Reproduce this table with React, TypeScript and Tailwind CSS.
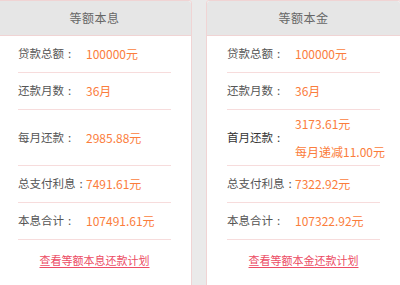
import React from 'react';

type Row = { label: string; value?: string; values?: string[]; tall?: boolean; dark?: boolean };

interface PanelProps {
  title: string;
  rows: Row[];
  link: string;
}

const Panel: React.FC<PanelProps> = ({ title, rows, link }) => (
  <div className="w-[195px] shrink-0 bg-white border border-[#f0d4d4] rounded-t-[3px] h-[300px]">
    <div className="h-[35px] bg-[#e6e6e6] border-b border-[#f0d4d4] rounded-t-[3px] flex items-center justify-center text-[12px] tracking-[0.5px] text-[#666]">
      {title}
    </div>
    <div className="px-[20px]">
      {rows.map((r) => (
        <div
          key={r.label}
          className={`flex items-center border-b border-[#f7dcdc] text-[12px] ${r.tall ? 'h-[56px]' : 'h-[37px]'}`}
        >
          <span
            className={`w-[68px] shrink-0 whitespace-nowrap text-[11.5px] ${r.dark ? 'text-[#333]' : 'text-[#555]'}`}
          >
            {r.label}
            <span className="ml-[4px]">:</span>
          </span>
          {r.values ? (
            <div className="flex flex-col gap-[12px] text-[#fb7d3c] leading-[16px]">
              {r.values.map((v) => (
                <span key={v} className="whitespace-nowrap">{v}</span>
              ))}
            </div>
          ) : (
            <span className="text-[#fb7d3c] whitespace-nowrap">{r.value}</span>
          )}
        </div>
      ))}
      <div className="pt-[12px] text-center text-[11px]">
        <a className="text-[#ec4c64] underline underline-offset-2 cursor-pointer">{link}</a>
      </div>
    </div>
  </div>
);

export default function App() {
  return (
    <div
      className="w-[400px] h-[285px] overflow-hidden bg-[#eaeaea]"
      style={{ fontFamily: '"Noto Sans CJK SC", "Noto Sans", sans-serif' }}
    >
      <div className="flex gap-[14px] -ml-[3px]">
        <Panel
          title="等额本息"
          rows={[
            { label: '贷款总额', value: '100000元' },
            { label: '还款月数', value: '36月' },
            { label: '每月还款', value: '2985.88元', tall: true },
            { label: '总支付利息', value: '7491.61元' },
            { label: '本息合计', value: '107491.61元' },
          ]}
          link="查看等额本息还款计划"
        />
        <Panel
          title="等额本金"
          rows={[
            { label: '贷款总额', value: '100000元' },
            { label: '还款月数', value: '36月' },
            { label: '首月还款', values: ['3173.61元', '每月递减11.00元'], tall: true, dark: true },
            { label: '总支付利息', value: '7322.92元' },
            { label: '本息合计', value: '107322.92元' },
          ]}
          link="查看等额本金还款计划"
        />
      </div>
    </div>
  );
}
